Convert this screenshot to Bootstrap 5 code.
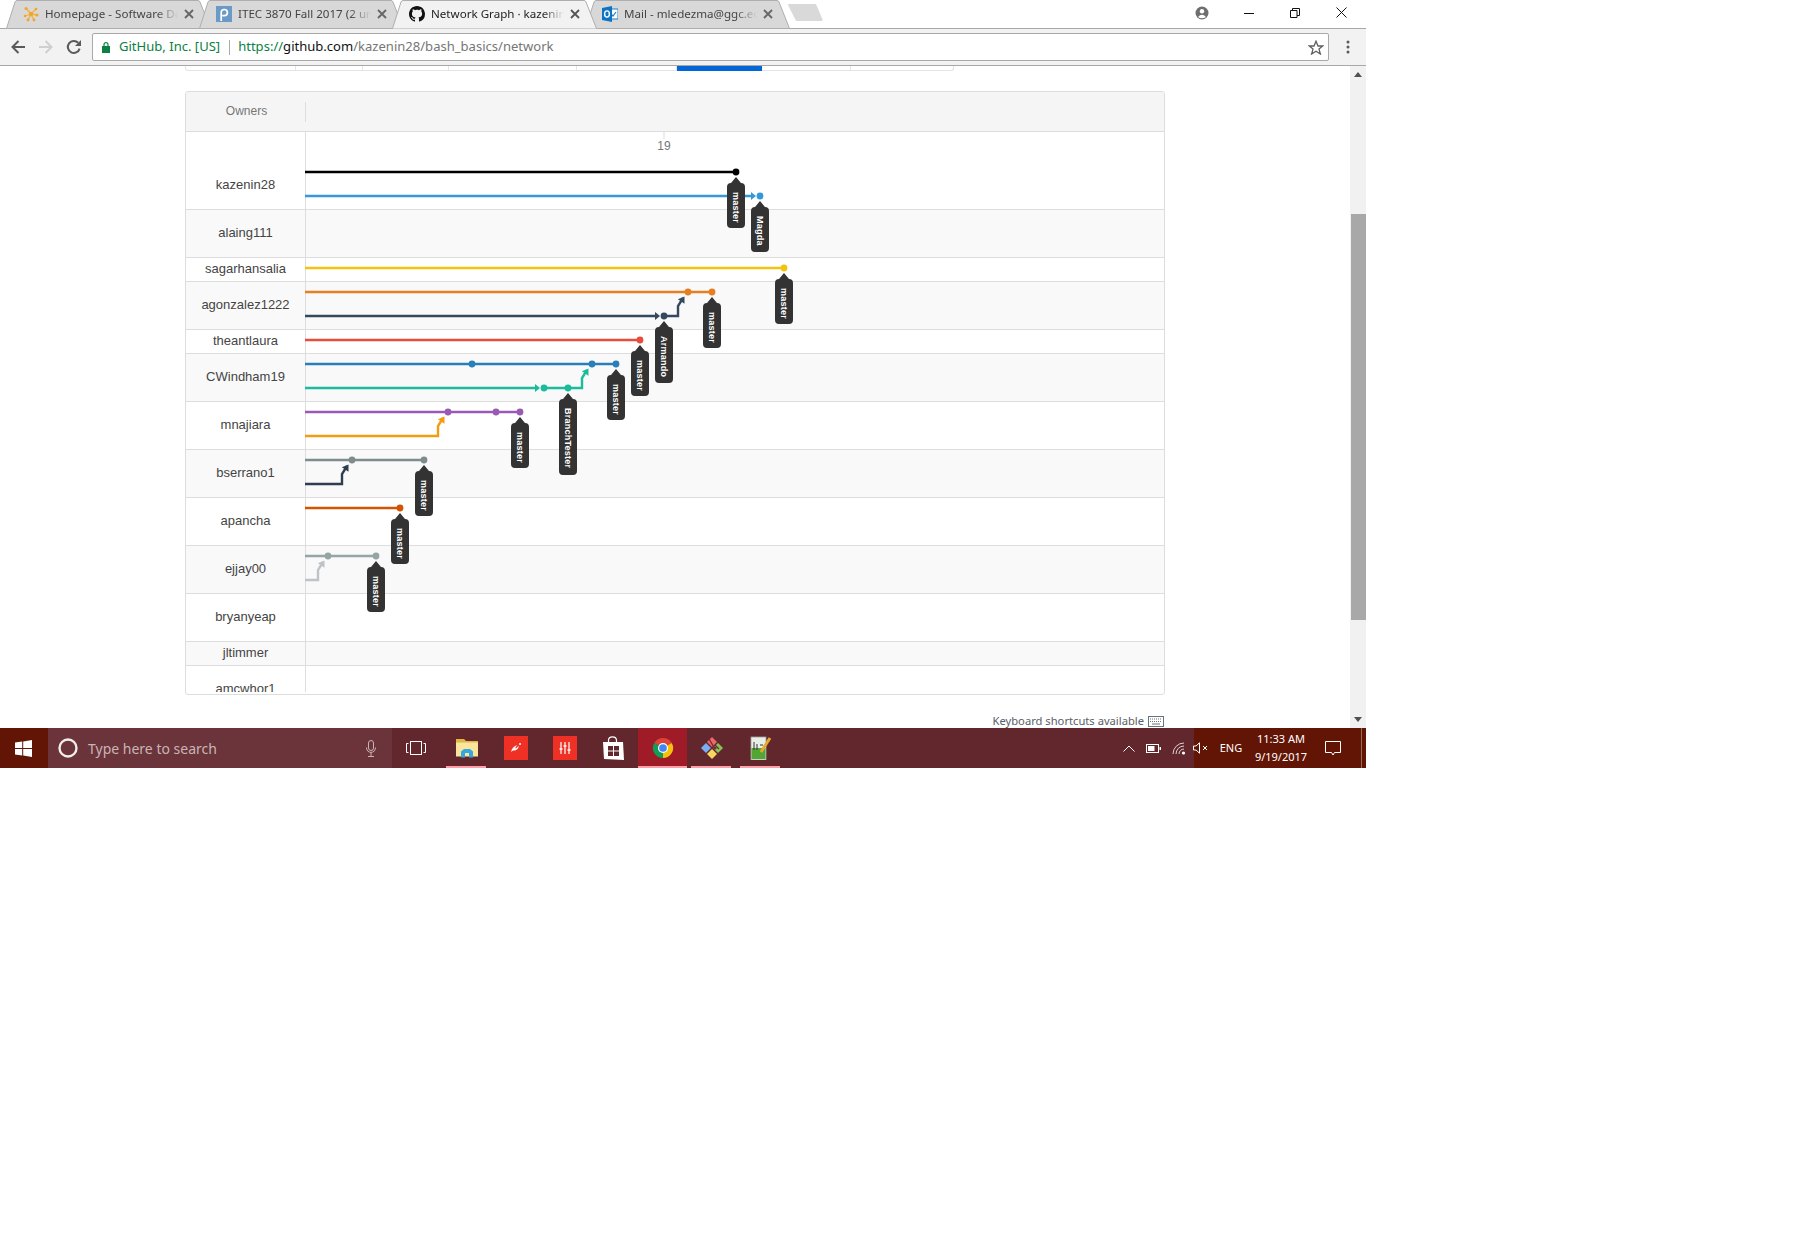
<!DOCTYPE html>
<html lang="en">
<head>
<meta charset="utf-8">
<title>Network Graph</title>
<link href="https://cdn.jsdelivr.net/npm/bootstrap@5.3.0/dist/css/bootstrap.min.css" rel="stylesheet">
<style>
body{margin:0;background:#fff;font-family:"Noto Sans",sans-serif;}
.shell{width:1366px;height:768px;overflow:hidden;}
.tabstrip{height:28px;position:relative;z-index:2;padding-left:6px;}
.ctab{width:205px;height:29px;margin-right:-12px;position:relative;padding:0 0 0 17px;font-size:11.6px;color:#444;}
.ctab.on{z-index:3;color:#222;}
.ctab>svg.tabbg{position:absolute;left:0;top:0;width:205px;height:29px;z-index:-1;}
.tabico{width:16px;height:16px;flex:none;}
.tabtxt{width:133px;margin-left:6px;white-space:nowrap;-webkit-mask-image:linear-gradient(to right,#000 84%,transparent 100%);mask-image:linear-gradient(to right,#000 84%,transparent 100%);}
.tabx{width:10px;height:10px;margin-left:6px;flex:none;}
.newtab{width:35px;height:17px;margin:-4px 0 0 10px;flex:none;}
.winbox{margin:0 2px 3px 0;}
.wincell{width:46px;height:26px;}
.wincell.ava{margin-right:1px;}
.toolbar{height:38px;background:#f2f2f2;border-top:1px solid #a8a8a8;border-bottom:1px solid #a8a8a8;padding-left:4px;}
.navcell{width:28px;}
.addr{margin-left:4px;width:1237px;height:28px;background:#fff;border:1px solid #a9a9a9;border-radius:2px;font-size:13.05px;padding:0 4px 0 9px;white-space:nowrap;}
.ev{color:#0b8043;margin-left:9px;}
.addrsep{width:1px;height:15px;background:#aaa;margin:0 8px 0 9px;}
.urlg{color:#0b8043;}.urlb{color:#111;}.urlp{color:#767676;}
.menucell{width:37px;}
.pagearea{height:662px;}
.pagemain{width:1350px;overflow:hidden;}
.vbar{width:16px;background:#f1f1f1;position:relative;}
.vthumb{position:absolute;left:1px;right:0;top:148px;height:406px;background:#a8a8a8;}
.varrow{position:absolute;left:4px;}
.subnav{width:769px;margin-left:185px;height:5px;border:1px solid #e1e4e8;border-top:0;border-radius:0 0 3px 3px;}
.subnav i{display:block;height:100%;border-right:1px solid #e1e4e8;}
.subnav i.cur{background:#0366d6;border-right:0;margin-bottom:-1px;height:5px;}
.gpanel{width:980px;height:604px;margin:20px 0 0 185px;border:1px solid #ddd;border-radius:3px;position:relative;overflow:hidden;background:#fff;}
.ghead{height:40px;background:#f5f5f5;border-bottom:1px solid #ddd;}
.ghead-own{width:120px;height:20px;padding:0 0 2px 2px;border-right:1px solid #ddd;color:#777;font:12px "Liberation Sans",sans-serif;}
.grows{height:560px;overflow:hidden;}
.grow{border-bottom:1px solid #ddd;}
.grow.alt{background:#f9f9f9;}
.own{width:120px;padding-bottom:2px;border-right:1px solid #ddd;color:#444;font:13px "Liberation Sans",sans-serif;}
.h24{height:24px;}.h48{height:48px;}.h78{height:78px;}
.own.pt{padding-top:30px;}
.gsvg{position:absolute;left:0;top:0;width:978px;height:602px;pointer-events:none;}
.gsvg text{font:bold 9px "Liberation Sans",sans-serif;fill:#fff;letter-spacing:.25px;}
.gsvg text.dayn{font:12px "Liberation Sans",sans-serif;fill:#777;letter-spacing:0;}
.kbhint{width:979px;margin:18px 0 0 185px;font-size:11.2px;color:#586069;line-height:16px;}
.taskbar{height:40px;background:#62272d;color:#fff;}
.tstart{width:48px;padding-right:2px;background:#621505;}
.tsearch{width:344px;background:#6b343a;color:#c8b4b6;font-size:14px;padding-left:10px;}
.tstext{margin-left:10px;}
.tcell{width:49px;height:40px;position:relative;}
.tcell.first{width:50px;padding-right:2px;}
.tcell.act{background:#9f1b28;}
.tcell .under{position:absolute;left:4px;right:5px;bottom:0;height:2px;background:#ffa0a8;}
.tcell.act .under{left:0;right:0;}
.trayc{width:25px;height:40px;}
.traygap{width:3px;}
.traydark{width:172px;background:#621505;font-size:11px;position:relative;}
.spk{margin:0 10px 0 -1px;}
.lang{width:26px;text-align:center;}
.clock{line-height:18px;text-align:center;font-size:11px;width:74px;}
.notif{margin-left:7px;}
.tsep{position:absolute;left:167px;top:0;bottom:0;width:1px;background:#9a6a58;}
</style>
</head>
<body>
<div class="shell d-flex flex-column">
  <div class="tabstrip d-flex align-items-center">
    <div class="ctab d-flex align-items-center">
      <svg class="tabbg" viewBox="0 0 205 29"><path d="M.5 28.5L9 2Q9.7.5 11 .5H192Q193.5.5 194 2L204.5 28.5Z" fill="#d8d8d8" stroke="#aeaeae"/></svg>
      <svg class="tabico" viewBox="0 0 16 16"><g stroke="#f4b13e" stroke-width="1.3"><path d="M8 8L3 2M8 8L13 3M8 8L2 10M8 8L14 9M8 8L5 14M8 8L11 14"/></g><g fill="#f2a529"><circle cx="8" cy="8" r="2.2"/><circle cx="3" cy="2.5" r="1.5"/><circle cx="13" cy="3" r="1.3"/><circle cx="2" cy="10" r="1.3"/><circle cx="14" cy="9" r="1.5"/><circle cx="5" cy="14" r="1.4"/><circle cx="11" cy="14" r="1.4"/></g></svg>
      <span class="tabtxt">Homepage - Software De</span>
      <svg class="tabx" viewBox="0 0 10 10"><path d="M1 1L9 9M9 1L1 9" stroke="#666" stroke-width="1.8"/></svg>
    </div>
    <div class="ctab d-flex align-items-center">
      <svg class="tabbg" viewBox="0 0 205 29"><path d="M.5 28.5L9 2Q9.7.5 11 .5H192Q193.5.5 194 2L204.5 28.5Z" fill="#d8d8d8" stroke="#aeaeae"/></svg>
      <svg class="tabico" viewBox="0 0 16 16"><rect width="16" height="16" fill="#6a9bc7"/><path d="M5.2 15V6.6A3.1 3.1 0 1 1 8.3 9.700H6.200" fill="none" stroke="#fff" stroke-width="1.7"/></svg>
      <span class="tabtxt">ITEC 3870 Fall 2017 (2 un</span>
      <svg class="tabx" viewBox="0 0 10 10"><path d="M1 1L9 9M9 1L1 9" stroke="#666" stroke-width="1.8"/></svg>
    </div>
    <div class="ctab on d-flex align-items-center">
      <svg class="tabbg" viewBox="0 0 205 29"><path d="M.5 28.5L9 2Q9.7.5 11 .5H192Q193.5.5 194 2L204.5 28.5" fill="#f2f2f2" stroke="#aeaeae"/></svg>
      <svg class="tabico" viewBox="0 0 16 16"><path fill="#111" d="M8 0C3.58 0 0 3.58 0 8c0 3.54 2.29 6.53 5.47 7.59.4.07.55-.17.55-.38 0-.19-.01-.82-.01-1.49-2.01.37-2.53-.49-2.69-.94-.09-.23-.48-.94-.82-1.13-.28-.15-.68-.52-.01-.53.63-.01 1.08.58 1.23.82.72 1.21 1.87.87 2.33.66.07-.52.28-.87.51-1.07-1.78-.2-3.64-.89-3.64-3.95 0-.87.31-1.59.82-2.15-.08-.2-.36-1.02.08-2.12 0 0 .67-.21 2.2.82.64-.18 1.32-.27 2-.27.68 0 1.36.09 2 .27 1.53-1.04 2.2-.82 2.2-.82.44 1.1.16 1.92.08 2.12.51.56.82 1.27.82 2.15 0 3.07-1.87 3.75-3.65 3.95.29.25.54.73.54 1.48 0 1.07-.01 1.93-.01 2.2 0 .21.15.46.55.38A8.013 8.013 0 0016 8c0-4.42-3.58-8-8-8z"/></svg>
      <span class="tabtxt">Network Graph · kazenin</span>
      <svg class="tabx" viewBox="0 0 10 10"><path d="M1 1L9 9M9 1L1 9" stroke="#555" stroke-width="1.8"/></svg>
    </div>
    <div class="ctab d-flex align-items-center">
      <svg class="tabbg" viewBox="0 0 205 29"><path d="M.5 28.5L9 2Q9.7.5 11 .5H192Q193.5.5 194 2L204.5 28.5Z" fill="#d8d8d8" stroke="#aeaeae"/></svg>
      <svg class="tabico" viewBox="0 0 16 16"><rect x="7" y="3" width="9" height="10" fill="#fff" stroke="#1f7fc9"/><path d="M9 8l2 2 3-4" fill="none" stroke="#1f7fc9" stroke-width="1.2"/><path fill="#0f73c4" d="M0 2L10 0V16L0 14Z"/><ellipse cx="5" cy="8" rx="2.4" ry="3.1" fill="none" stroke="#fff" stroke-width="1.4"/></svg>
      <span class="tabtxt">Mail - mledezma@ggc.ec</span>
      <svg class="tabx" viewBox="0 0 10 10"><path d="M1 1L9 9M9 1L1 9" stroke="#666" stroke-width="1.8"/></svg>
    </div>
    <svg class="newtab" viewBox="0 0 35 17"><path d="M0 1Q0 0 1 0H27Q28 0 28.4 1L34.6 15.5Q35 17 33 17H9Q8 17 7.6 16Z" fill="#d9d9d9"/></svg>
    <div class="winbox ms-auto d-flex">
      <div class="wincell ava d-flex align-items-center justify-content-center"><svg width="14" height="14" viewBox="0 0 14 14"><circle cx="7" cy="7" r="6.5" fill="#6e6e6e"/><circle cx="7" cy="5.2" r="2.2" fill="#fff"/><path d="M3 11Q7 6.5 11 11Q7 13.4 3 11Z" fill="#fff"/></svg></div>
      <div class="wincell d-flex align-items-center justify-content-center"><svg width="10" height="10" viewBox="0 0 10 10"><path d="M0 5.5H10" stroke="#111"/></svg></div>
      <div class="wincell d-flex align-items-center justify-content-center"><svg width="10" height="10" viewBox="0 0 10 10"><path d="M.5 2.5h6.5v7h-6.5zM2.5 2.5V.5h7v7H7" fill="none" stroke="#111"/></svg></div>
      <div class="wincell d-flex align-items-center justify-content-center"><svg width="11" height="11" viewBox="0 0 11 11"><path d="M.5.5L10.5 10.5M10.5.5L.5 10.5" stroke="#111"/></svg></div>
    </div>
  </div>
  <div class="toolbar d-flex align-items-center">
    <div class="navcell d-flex justify-content-center"><svg width="16" height="16" viewBox="0 0 16 16"><path d="M15 8H2.5M8.5 2L2.5 8L8.5 14" fill="none" stroke="#5a5a5a" stroke-width="2"/></svg></div>
    <div class="navcell d-flex justify-content-center"><svg width="16" height="16" viewBox="0 0 16 16"><path d="M1 8H13.5M7.5 2L13.5 8L7.5 14" fill="none" stroke="#cfcfcf" stroke-width="2"/></svg></div>
    <div class="navcell d-flex justify-content-center"><svg width="16" height="16" viewBox="0 0 16 16"><path d="M13.6 9.6A6 6 0 1 1 12.2 3.8" fill="none" stroke="#5a5a5a" stroke-width="2"/><path d="M15 1V7H9Z" fill="#5a5a5a"/></svg></div>
    <div class="addr d-flex align-items-center">
      <svg width="8" height="11" viewBox="0 0 8 11"><rect y="4" width="8" height="7" fill="#0b8043"/><path d="M2 4.5V2.6a2 2 0 0 1 4 0V4.5" fill="none" stroke="#0b8043" stroke-width="1.2"/></svg>
      <span class="ev">GitHub, Inc. [US]</span><span class="addrsep"></span>
      <span><span class="urlg">https://</span><span class="urlb">github.com</span><span class="urlp">/kazenin28/bash_basics/network</span></span>
      <svg class="ms-auto" width="16" height="15" viewBox="0 0 16 15"><path d="M8 1.2L10 6H14.8L11 9.1L12.4 14L8 11.2L3.6 14L5 9.1L1.2 6H6Z" fill="none" stroke="#5f5f5f" stroke-width="1.3"/></svg>
    </div>
    <div class="menucell d-flex justify-content-center"><svg width="4" height="14" viewBox="0 0 4 14"><g fill="#5a5a5a"><circle cx="2" cy="2" r="1.5"/><circle cx="2" cy="7" r="1.5"/><circle cx="2" cy="12" r="1.5"/></g></svg></div>
  </div>
  <div class="pagearea d-flex">
    <div class="pagemain">
      <div class="subnav d-flex">
        <i style="width:110px"></i><i style="width:67px"></i><i style="width:86px"></i><i style="width:128px"></i><i style="width:100px"></i><i class="cur" style="width:85px"></i><i style="width:89px"></i>
      </div>
      <div class="gpanel">
        <div class="ghead d-flex align-items-center">
          <div class="ghead-own d-flex align-items-center justify-content-center">Owners</div>
        </div>
        <div class="grows">
          <div class="grow h78 d-flex"><div class="own pt d-flex align-items-center justify-content-center">kazenin28</div></div>
          <div class="grow alt h48 d-flex"><div class="own d-flex align-items-center justify-content-center">alaing111</div></div>
          <div class="grow h24 d-flex"><div class="own d-flex align-items-center justify-content-center">sagarhansalia</div></div>
          <div class="grow alt h48 d-flex"><div class="own d-flex align-items-center justify-content-center">agonzalez1222</div></div>
          <div class="grow h24 d-flex"><div class="own d-flex align-items-center justify-content-center">theantlaura</div></div>
          <div class="grow alt h48 d-flex"><div class="own d-flex align-items-center justify-content-center">CWindham19</div></div>
          <div class="grow h48 d-flex"><div class="own d-flex align-items-center justify-content-center">mnajiara</div></div>
          <div class="grow alt h48 d-flex"><div class="own d-flex align-items-center justify-content-center">bserrano1</div></div>
          <div class="grow h48 d-flex"><div class="own d-flex align-items-center justify-content-center">apancha</div></div>
          <div class="grow alt h48 d-flex"><div class="own d-flex align-items-center justify-content-center">ejjay00</div></div>
          <div class="grow h48 d-flex"><div class="own d-flex align-items-center justify-content-center">bryanyeap</div></div>
          <div class="grow alt h24 d-flex"><div class="own d-flex align-items-center justify-content-center">jltimmer</div></div>
          <div class="grow h48 d-flex"><div class="own d-flex align-items-center justify-content-center">amcwhor1</div></div>
        </div>
        <svg class="gsvg" viewBox="186 92 978 602">
          <defs>
            <polygon id="hh" points="-4,0 -9,-4 -9,4"/>
            <polygon id="hd" points="-3.5,4.5 -10.1,7.3 -3.5,11.7"/>
            <path id="t42" fill="#333" d="M0 5L5 11Q9 11 9 15V52Q9 56 5 56H-5Q-9 56 -9 52V15Q-9 11 -5 11Z"/>
            <path id="t45" fill="#333" d="M0 5L5 11Q9 11 9 15V52Q9 56 5 56H-5Q-9 56 -9 52V15Q-9 11 -5 11Z"/>
            <path id="t55" fill="#333" d="M0 5L5 11Q9 11 9 15V63Q9 67 5 67H-5Q-9 67 -9 63V15Q-9 11 -5 11Z"/>
            <path id="t75" fill="#333" d="M0 5L5 11Q9 11 9 15V83Q9 87 5 87H-5Q-9 87 -9 83V15Q-9 11 -5 11Z"/>
          </defs>
          <path d="M664 132V139" stroke="#ddd"/>
          <text class="dayn" x="664" y="150" text-anchor="middle">19</text>
          <g fill="none" stroke-width="2.4">
            <path stroke="#000" d="M305 172H736"/>
            <path stroke="#3498db" d="M305 196H751"/>
            <path stroke="#f1c40f" d="M305 268H784"/>
            <path stroke="#e67e22" d="M305 292H712"/>
            <path stroke="#34495e" d="M305 316H655M664 316H678V306L683 298"/>
            <path stroke="#e74c3c" d="M305 340H640"/>
            <path stroke="#2980b9" d="M305 364H616"/>
            <path stroke="#1abc9c" d="M305 388H535M544 388H582V378L587 370"/>
            <path stroke="#9b59b6" d="M305 412H520"/>
            <path stroke="#f39c12" d="M305 436H438V426L443 418"/>
            <path stroke="#7f8c8d" d="M305 460H424"/>
            <path stroke="#2c3e50" d="M305 484H342V474L347 466"/>
            <path stroke="#d35400" d="M305 508H400"/>
            <path stroke="#95a5a6" d="M305 556H376"/>
            <path stroke="#bdc3c7" d="M305 580H318V570L323 562"/>
          </g>
          <use href="#hh" fill="#3498db" x="760" y="196"/>
          <use href="#hh" fill="#34495e" x="664" y="316"/>
          <use href="#hh" fill="#1abc9c" x="544" y="388"/>
          <use href="#hd" fill="#34495e" x="688" y="292"/>
          <use href="#hd" fill="#1abc9c" x="592" y="364"/>
          <use href="#hd" fill="#f39c12" x="448" y="412"/>
          <use href="#hd" fill="#2c3e50" x="352" y="460"/>
          <use href="#hd" fill="#bdc3c7" x="328" y="556"/>
          <g>
            <circle cx="736" cy="172" r="3.4" fill="#000"/>
            <circle cx="760" cy="196" r="3.4" fill="#3498db"/>
            <circle cx="784" cy="268" r="3.4" fill="#f1c40f"/>
            <circle cx="688" cy="292" r="3.4" fill="#e67e22"/><circle cx="712" cy="292" r="3.4" fill="#e67e22"/>
            <circle cx="664" cy="316" r="3.4" fill="#34495e"/>
            <circle cx="640" cy="340" r="3.4" fill="#e74c3c"/>
            <circle cx="472" cy="364" r="3.4" fill="#2980b9"/><circle cx="592" cy="364" r="3.4" fill="#2980b9"/><circle cx="616" cy="364" r="3.4" fill="#2980b9"/>
            <circle cx="544" cy="388" r="3.4" fill="#1abc9c"/><circle cx="568" cy="388" r="3.4" fill="#1abc9c"/>
            <circle cx="448" cy="412" r="3.4" fill="#9b59b6"/><circle cx="496" cy="412" r="3.4" fill="#9b59b6"/><circle cx="520" cy="412" r="3.4" fill="#9b59b6"/>
            <circle cx="352" cy="460" r="3.4" fill="#7f8c8d"/><circle cx="424" cy="460" r="3.4" fill="#7f8c8d"/>
            <circle cx="400" cy="508" r="3.4" fill="#d35400"/>
            <circle cx="328" cy="556" r="3.4" fill="#95a5a6"/><circle cx="376" cy="556" r="3.4" fill="#95a5a6"/>
          </g>
          <g transform="translate(736,172)"><use href="#t45"/><text transform="translate(-3,20) rotate(90)">master</text></g>
          <g transform="translate(760,196)"><use href="#t42"/><text transform="translate(-3,20) rotate(90)">Magda</text></g>
          <g transform="translate(784,268)"><use href="#t45"/><text transform="translate(-3,20) rotate(90)">master</text></g>
          <g transform="translate(712,292)"><use href="#t45"/><text transform="translate(-3,20) rotate(90)">master</text></g>
          <g transform="translate(664,316)"><use href="#t55"/><text transform="translate(-3,20) rotate(90)">Armando</text></g>
          <g transform="translate(640,340)"><use href="#t45"/><text transform="translate(-3,20) rotate(90)">master</text></g>
          <g transform="translate(616,364)"><use href="#t45"/><text transform="translate(-3,20) rotate(90)">master</text></g>
          <g transform="translate(568,388)"><use href="#t75"/><text transform="translate(-3,20) rotate(90)">BranchTester</text></g>
          <g transform="translate(520,412)"><use href="#t45"/><text transform="translate(-3,20) rotate(90)">master</text></g>
          <g transform="translate(424,460)"><use href="#t45"/><text transform="translate(-3,20) rotate(90)">master</text></g>
          <g transform="translate(400,508)"><use href="#t45"/><text transform="translate(-3,20) rotate(90)">master</text></g>
          <g transform="translate(376,556)"><use href="#t45"/><text transform="translate(-3,20) rotate(90)">master</text></g>
        </svg>
      </div>
      <div class="kbhint d-flex justify-content-end align-items-center gap-1">Keyboard shortcuts available
        <svg width="16" height="11" viewBox="0 0 16 11"><rect x=".5" y=".5" width="15" height="10" fill="#fff" stroke="#6a737d"/><path d="M2 3h12M2 5.5h12" stroke="#6a737d" stroke-dasharray="1 1"/><path d="M4 8h8" stroke="#6a737d"/></svg>
      </div>
    </div>
    <div class="vbar">
      <svg class="varrow" style="top:6px" width="8" height="5" viewBox="0 0 8 5"><path d="M4 0L8 5H0Z" fill="#505050"/></svg>
      <div class="vthumb"></div>
      <svg class="varrow" style="top:651px" width="8" height="5" viewBox="0 0 8 5"><path d="M0 0H8L4 5Z" fill="#505050"/></svg>
    </div>
  </div>
  <div class="taskbar d-flex">
    <div class="tstart d-flex align-items-center justify-content-center"><svg width="17" height="17" viewBox="0 0 17 17"><path fill="#fff" d="M0 2.6L7.2 1.5V8H0ZM8.2 1.4L17 0V8H8.2ZM0 9H7.2V15.5L0 14.4ZM8.2 9H17V17L8.2 15.6Z"/></svg></div>
    <div class="tsearch d-flex align-items-center">
      <svg width="20" height="20" viewBox="0 0 20 20"><circle cx="10" cy="10" r="8.5" fill="none" stroke="#f3ecec" stroke-width="2.4"/></svg>
      <span class="tstext me-auto">Type here to search</span>
      <svg width="10" height="17" viewBox="0 0 10 17" class="me-3"><rect x="2.5" y=".5" width="5" height="10" rx="2.5" fill="none" stroke="#c8b4b6"/><path d="M.5 7.5C.5 14 9.500 14 9.500 7.5M5 12.500V16.500M2 16.500H8" fill="none" stroke="#c8b4b6"/></svg>
    </div>
    <div class="tcell first d-flex align-items-center justify-content-center"><svg width="20" height="14" viewBox="0 0 20 14"><rect x="4.500" y=".5" width="11" height="13" fill="none" stroke="#fff"/><path d="M2.500 2.500H.5V11.500H2.500M17.500 2.500H19.500V11.500H17.500" fill="none" stroke="#fff"/></svg></div>
    <div class="tcell d-flex align-items-center justify-content-center"><svg width="22" height="19" viewBox="0 0 22 19"><path fill="#e0b648" d="M0 0H8L10 2H22V17H0Z"/><path fill="#fbe59c" d="M0 3.500H22V17.500H0Z"/><path fill="#35a7e0" d="M5 18.500V12.500L8 10H14L17 12.500V18.500H13V14H9V18.500Z"/></svg><span class="under"></span></div>
    <div class="tcell d-flex align-items-center justify-content-center"><svg width="24" height="24" viewBox="0 0 24 24"><rect width="24" height="24" fill="#ee3124"/><path d="M7 16Q8 11 13 9L11 12.500Q13 12 15 9.500Q14 15 9 14.500Z" fill="#fff"/><circle cx="16" cy="8" r="1" fill="#fff"/></svg></div>
    <div class="tcell d-flex align-items-center justify-content-center"><svg width="24" height="24" viewBox="0 0 24 24"><rect width="24" height="24" fill="#ee3124"/><path d="M8 6V18M12 6V18M16 6V18" stroke="#fff" stroke-width="1.2"/><path d="M6.500 13H9.500M10.500 10H13.500M14.500 14H17.500" stroke="#fff" stroke-width="1.6"/></svg></div>
    <div class="tcell d-flex align-items-center justify-content-center"><svg width="21" height="24" viewBox="0 0 21 24"><path d="M5.500 7V4.500Q5.500 .8 9.500 .8T13.500 4.500V7" fill="none" stroke="#fff" stroke-width="1.2"/><path fill="#fff" d="M0 6H20L21 24L1 23Z"/><path fill="#62272d" d="M5 10H10V14.500H5ZM11 10H16V14.500H11ZM5 15.500H10V20H5ZM11 15.500H16V20H11Z"/></svg></div>
    <div class="tcell act d-flex align-items-center justify-content-center"><svg width="22" height="22" viewBox="0 0 24 24"><path fill="#db4437" d="M2.470 6.500A11 11 0 0 1 21.530 6.500L12 12Z"/><path fill="#f4c20d" d="M21.530 6.500A11 11 0 0 1 12 23L12 12Z"/><path fill="#0f9d58" d="M12 23A11 11 0 0 1 2.470 6.500L12 12Z"/><circle cx="12" cy="12" r="5.500" fill="#fff"/><circle cx="12" cy="12" r="4.200" fill="#4285f4"/></svg><span class="under"></span></div>
    <div class="tcell d-flex align-items-center justify-content-center"><svg width="24" height="24" viewBox="0 0 24 24"><path fill="#e96a6a" d="M12 1L17 6L12 11L7 6Z"/><path fill="#78aef5" d="M6 7L11 12L6 17L1 12Z"/><path fill="#85c45c" d="M18 7L23 12L18 17L13 12Z"/><path fill="#f5d860" d="M12 13L17 18L12 23L7 18Z"/><path d="M9 3L15 13M15 9L19 13" stroke="#7a2b30" stroke-width="1.4"/><circle cx="15" cy="12" r="1.600" fill="#7a2b30"/></svg><span class="under"></span></div>
    <div class="tcell d-flex align-items-center justify-content-center"><svg width="22" height="24" viewBox="0 0 22 24"><rect x="1" y="1" width="15" height="23" fill="#e9efe6" stroke="#9aa39a" stroke-width=".8"/><rect x="1.500" y="12" width="14" height="11" fill="#53a534"/><path d="M4 6V14M7 8V14M10 9H13" stroke="#333" stroke-width="1"/><path d="M11 16L20 2" stroke="#e7a92f" stroke-width="3"/></svg><span class="under"></span></div>
    <div class="ms-auto d-flex">
      <div class="trayc d-flex align-items-center justify-content-center"><svg width="12" height="7" viewBox="0 0 12 7"><path d="M.5 6.500L6 1L11.500 6.500" fill="none" stroke="#fff"/></svg></div>
      <div class="trayc d-flex align-items-center justify-content-center"><svg width="15" height="9" viewBox="0 0 15 9"><rect x=".5" y=".5" width="12" height="8" fill="none" stroke="#fff"/><rect x="2" y="2" width="6.500" height="5" fill="#fff"/><rect x="13.500" y="3" width="1.500" height="3" fill="#fff"/></svg></div>
      <div class="trayc d-flex align-items-center justify-content-center"><svg width="14" height="13" viewBox="0 0 14 13"><g fill="none" stroke="#ddd0d0"><path d="M1 12A11 11 0 0 1 12 1"/><path d="M4 12A8 8 0 0 1 12 4"/><path d="M7 12A5 5 0 0 1 12 7"/></g><circle cx="11.500" cy="11" r="1.600" fill="#fff"/></svg></div>
      <div class="traygap"></div>
      <div class="traydark d-flex align-items-center">
        <svg class="spk" width="15" height="12" viewBox="0 0 15 12"><path d="M.5 4H3L6.500.8V11.200L3 8H.5Z" fill="none" stroke="#fff"/><path d="M10 4L14 8M14 4L10 8" stroke="#fff"/></svg>
        <span class="lang">ENG</span>
        <div class="clock"><div>11:33 AM</div><div>9/19/2017</div></div>
        <svg class="notif" width="16" height="15" viewBox="0 0 16 15"><path d="M.5.5H15.500V11.500H9.500L8 14L6.500 11.500H.5Z" fill="none" stroke="#fff"/></svg>
        <span class="tsep"></span>
      </div>
    </div>
  </div>
</div>
<script src="https://cdn.jsdelivr.net/npm/bootstrap@5.3.0/dist/js/bootstrap.bundle.min.js"></script>
</body>
</html>
